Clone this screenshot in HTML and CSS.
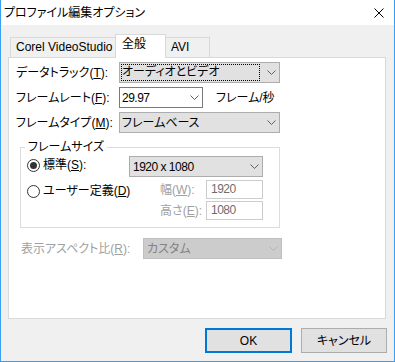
FILE: index.html
```html
<!DOCTYPE html>
<html lang="ja">
<head>
<meta charset="utf-8">
<title>プロファイル編集オプション</title>
<link rel="stylesheet" href="styles.css">
</head>
<body>
<div class="window">
  <div class="titlebar">
    <span class="title">プロファイル編集オプション</span>
    <svg class="close" width="10" height="10" viewBox="0 0 10 10"><path d="M0.5 0.5L9.5 9.5M9.5 0.5L0.5 9.5" stroke="#000" stroke-width="1" fill="none"/></svg>
  </div>
  <div class="client">
    <div class="tabs">
      <div class="tab tab-corel">Corel VideoStudio</div>
      <div class="tab tab-active">全般</div>
      <div class="tab tab-avi">AVI</div>
    </div>
    <div class="panel">
      <div class="row">
        <span class="label">データトラック(<u>T</u>):</span>
        <div class="combo combo-wide combo-focused">
          <span class="focus-rect">オーディオとビデオ</span>
          <svg class="chev" width="9" height="5" viewBox="0 0 9 5"><polyline points="0.5,0.5 4.5,4.5 8.5,0.5" fill="none" stroke="#606060" stroke-width="1"/></svg>
        </div>
      </div>
      <div class="row">
        <span class="label">フレームレート(<u>F</u>):</span>
        <div class="combo combo-edit">
          <span class="combo-text num">29.97</span>
          <svg class="chev" width="9" height="5" viewBox="0 0 9 5"><polyline points="0.5,0.5 4.5,4.5 8.5,0.5" fill="none" stroke="#606060" stroke-width="1"/></svg>
        </div>
        <span class="unit">フレーム/秒</span>
      </div>
      <div class="row">
        <span class="label">フレームタイプ(<u>M</u>):</span>
        <div class="combo combo-wide">
          <span class="combo-text">フレームベース</span>
          <svg class="chev" width="9" height="5" viewBox="0 0 9 5"><polyline points="0.5,0.5 4.5,4.5 8.5,0.5" fill="none" stroke="#606060" stroke-width="1"/></svg>
        </div>
      </div>
      <fieldset class="group">
        <legend class="group-title">フレームサイズ</legend>
        <div class="group-grid">
          <div class="radio radio-std">
            <svg width="13" height="13" viewBox="0 0 13 13"><circle cx="6.5" cy="6.5" r="6" fill="#fff" stroke="#333" stroke-width="1"/><circle cx="6.5" cy="6.5" r="3.5" fill="#333"/></svg>
            <span>標準(<u>S</u>):</span>
          </div>
          <div class="combo combo-size">
            <span class="combo-text num">1920 x 1080</span>
            <svg class="chev" width="9" height="5" viewBox="0 0 9 5"><polyline points="0.5,0.5 4.5,4.5 8.5,0.5" fill="none" stroke="#606060" stroke-width="1"/></svg>
          </div>
          <div class="radio radio-custom">
            <svg width="13" height="13" viewBox="0 0 13 13"><circle cx="6.5" cy="6.5" r="6" fill="#fff" stroke="#333" stroke-width="1"/></svg>
            <span>ユーザー定義(<u>D</u>)</span>
          </div>
          <span class="field-label">幅(<u>W</u>):</span>
          <div class="textbox num">1920</div>
          <span class="field-label">高さ(<u>E</u>):</span>
          <div class="textbox num">1080</div>
        </div>
      </fieldset>
      <div class="row row-aspect">
        <span class="label label-aspect">表示アスペクト比(<u>R</u>):</span>
        <div class="combo combo-disabled">
          <span class="combo-text">カスタム</span>
          <svg class="chev" width="9" height="5" viewBox="0 0 9 5"><polyline points="0.5,0.5 4.5,4.5 8.5,0.5" fill="none" stroke="#b4b4b4" stroke-width="1"/></svg>
        </div>
      </div>
    </div>
    <div class="buttons">
      <div class="btn btn-default">OK</div>
      <div class="btn btn-cancel">キャンセル</div>
    </div>
  </div>
</div>
</body>
</html>
```
FILE: styles.css
```css
* { box-sizing: border-box; }
html, body { margin: 0; padding: 0; }
body {
  width: 395px;
  height: 362px;
  background: #fff;
  color: #000;
  font-family: "Liberation Sans", "Noto Sans CJK JP", sans-serif;
  font-size: 12px;
  line-height: 16px;
  font-feature-settings: "palt";
}
u { text-decoration: underline; text-underline-offset: 1px; }

.window {
  width: 395px;
  height: 362px;
  border: 1px solid #3a9ff0;
  border-top: none;
  display: flex;
  flex-direction: column;
}
.titlebar {
  height: 25px;
  flex: none;
  background: #fff;
  display: flex;
  align-items: center;
  padding-left: 3px;
  padding-right: 10px;
}
.title { flex: 1; }
.close { display: block; }

.client {
  flex: 1;
  background: #f0f0f0;
  padding: 9px 8px 8px 7px;
  display: flex;
  flex-direction: column;
}

.tabs {
  display: flex;
  align-items: flex-end;
  height: 24px;
  padding-left: 2px;
  margin-bottom: -1px;
}
.tab {
  height: 21px;
  border: 1px solid #d9d9d9;
  border-bottom: none;
  background: #f0f0f0;
  padding-top: 1px;
  white-space: nowrap;
}
.tab-corel { width: 105px; border-right: none; padding-left: 5px; }
.tab-active {
  width: 51px;
  height: 24px;
  background: #fff;
  padding-left: 6px;
  position: relative;
  z-index: 1;
}
.tab-avi { width: 44px; border-left: none; padding-left: 5px; }

.panel {
  height: 262px;
  flex: none;
  background: #fff;
  border: 1px solid #d9d9d9;
  padding: 4px 0 0 7px;
  display: flex;
  flex-direction: column;
}

.row {
  display: flex;
  align-items: center;
  height: 21px;
}
.row + .row { margin-top: 4px; }
.label { width: 103px; flex: none; white-space: nowrap; }

.combo {
  height: 21px;
  flex: none;
  display: flex;
  align-items: center;
  border: 1px solid #adadad;
  background: #e1e1e1;
  padding-left: 2px;
  padding-right: 3px;
}
.combo-text { flex: 1; white-space: nowrap; overflow: hidden; }
.chev { display: block; flex: none; margin-left: auto; }
.combo-wide { width: 161px; }
.combo-focused { padding-left: 1px; }
.focus-rect {
  width: 139px;
  height: 17px;
  border: 1px dotted #000;
  line-height: 15px;
  white-space: nowrap;
}
.combo-edit {
  width: 84px;
  background: #fff;
  border-color: #7a7a7a;
}
.unit { margin-left: 13px; white-space: nowrap; }

.num {
  font-family: "Liberation Sans", sans-serif;
  font-size: 12px;
  letter-spacing: -0.5px;
}

.group {
  width: 260px;
  min-width: 0;
  margin: 6px 0 0 4px;
  border: 1px solid #dcdcdc;
  padding: 1px 0 7px 6px;
}
.group-title {
  margin-left: -2px;
  padding: 0 3px;
  line-height: 16px;
}
.group-grid {
  display: grid;
  grid-template-columns: 102px 77px 57px;
  grid-template-rows: 22px 19px 19px;
  row-gap: 2px;
}
.radio {
  display: flex;
  align-items: center;
  gap: 3px;
  align-self: start;
  white-space: nowrap;
}
.radio svg { display: block; flex: none; }
.radio-std { margin-top: 1px; }
.radio-custom { grid-column: 1; grid-row: 2 / 4; margin-top: 3px; }
.combo-size {
  grid-column: 2 / 4;
  grid-row: 1;
  align-self: start;
  padding-left: 3px;
}
.field-label {
  color: #a0a0a0;
  padding-left: 31px;
  align-self: center;
  white-space: nowrap;
}
.textbox {
  height: 19px;
  border: 1px solid #cccccc;
  background: #fff;
  color: #6d6d6d;
  padding-left: 4px;
  line-height: 17px;
}

.row.row-aspect { margin-top: 10px; padding-left: 5px; }
.label-aspect { width: 122px; color: #a0a0a0; }
.combo-disabled {
  width: 139px;
  background: #cccccc;
  border-color: #bfbfbf;
  color: #838383;
  padding-left: 3px;
}

.buttons {
  margin-top: 9px;
  margin-right: -1px;
  display: flex;
  justify-content: flex-end;
  gap: 9px;
}
.btn {
  height: 25px;
  background: #e1e1e1;
  border: 1px solid #adadad;
  display: flex;
  align-items: center;
  justify-content: center;
}
.btn-default { width: 87px; border: 2px solid #0078d7; }
.btn-cancel { width: 86px; }
```
